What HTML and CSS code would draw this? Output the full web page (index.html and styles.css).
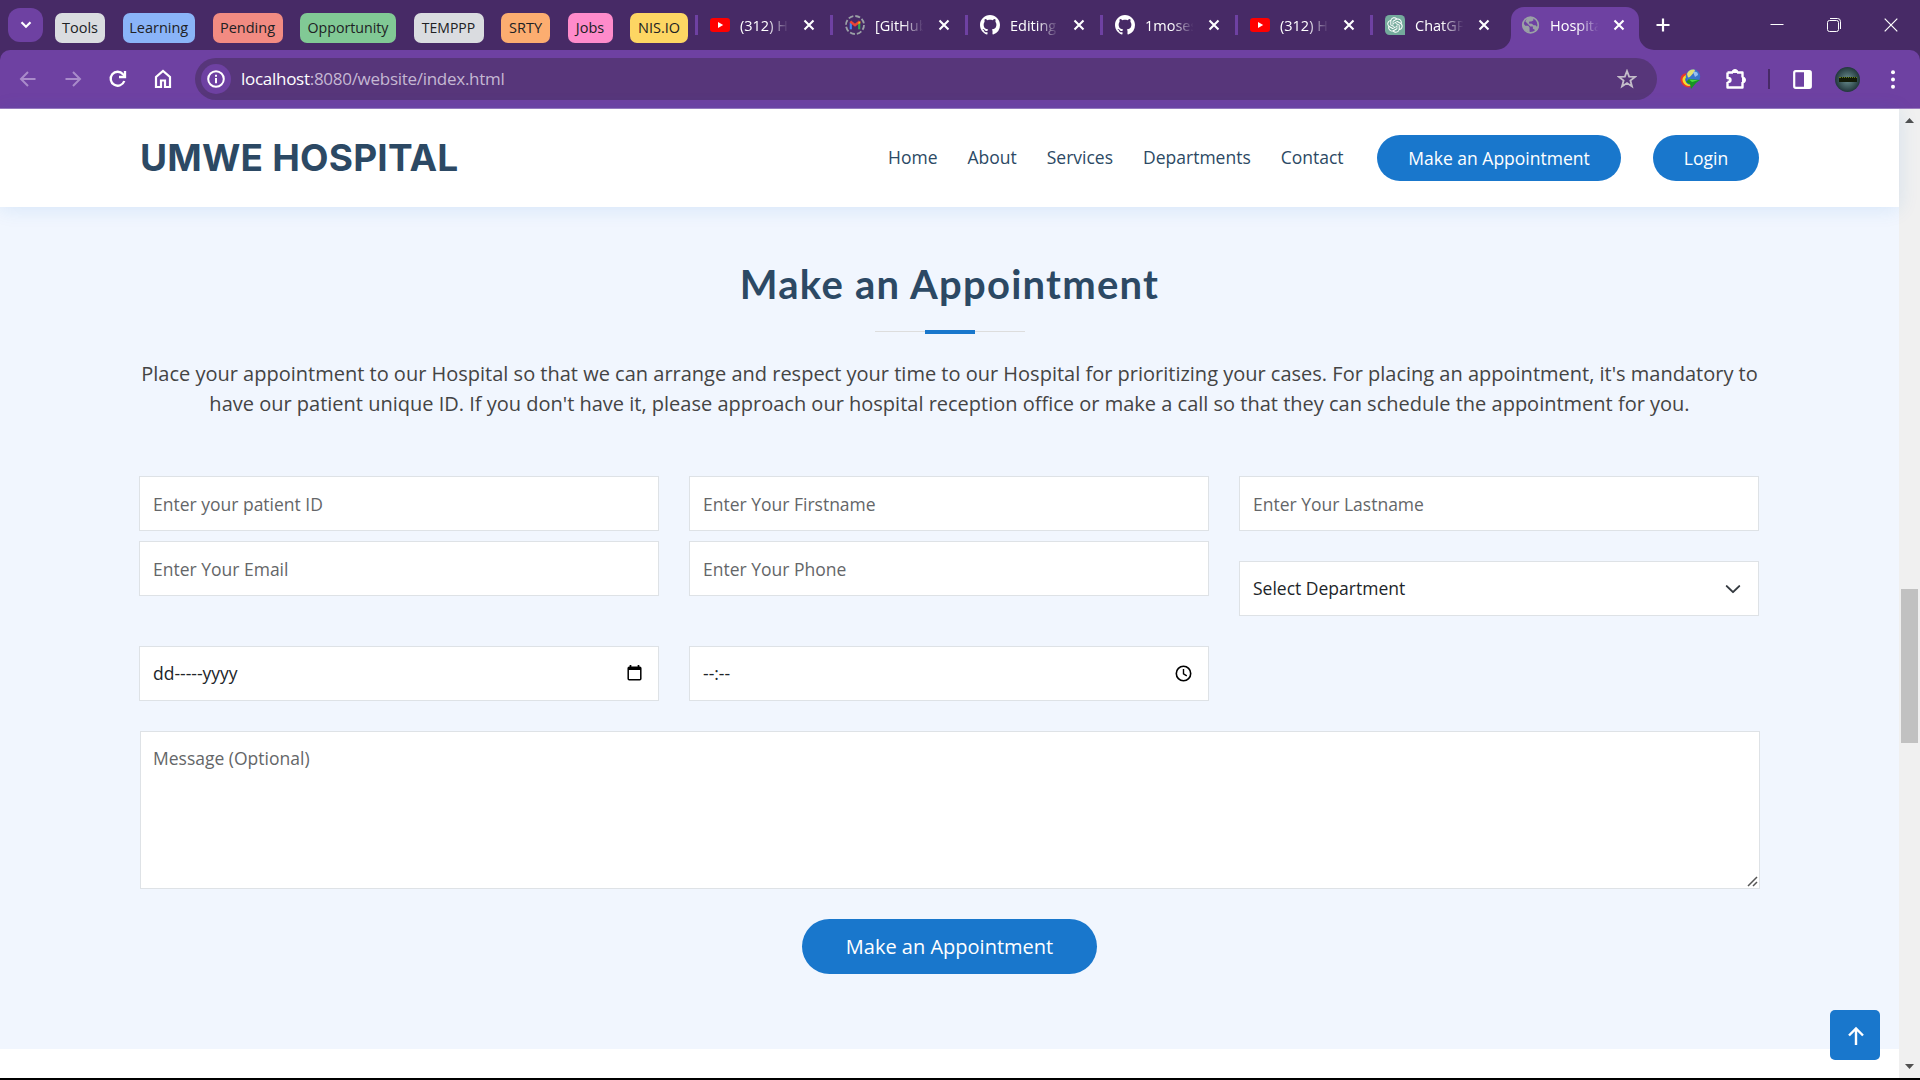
FILE: index.html
```html
<!DOCTYPE html>
<html lang="en">
<head>
<meta charset="utf-8">
<title>Hospital</title>
<link rel="stylesheet" href="styles.css">
</head>
<body>
<svg class="defs" width="0" height="0">
  <symbol id="x" viewBox="0 0 12 12"><path d="M1.500 1.500l9 9M10.500 1.500l-9 9" stroke="#fff" stroke-width="2.100" fill="none"/></symbol>
  <symbol id="yt" viewBox="0 0 20 20"><rect y="3" width="20" height="14" rx="3.200" fill="#f00"/><path d="M8 7l5.200 3L8 13z" fill="#fff"/></symbol>
  <symbol id="gh" viewBox="0 0 16 16"><path fill="#fff" d="M8 0C3.580 0 0 3.580 0 8c0 3.540 2.290 6.530 5.470 7.590.4.070.550-.170.550-.380 0-.190-.010-.820-.010-1.490-2.010.370-2.530-.490-2.690-.940-.090-.230-.480-.940-.820-1.130-.280-.150-.680-.520-.010-.530.630-.010 1.080.580 1.230.820.720 1.210 1.870.870 2.330.660.070-.520.280-.870.510-1.070-1.780-.2-3.640-.890-3.640-3.950 0-.870.310-1.590.820-2.150-.080-.2-.360-1.020.080-2.120 0 0 .670-.210 2.200.820.640-.180 1.320-.270 2-.270s1.360.090 2 .270c1.530-1.040 2.200-.820 2.200-.820.440 1.100.160 1.920.080 2.120.510.560.820 1.270.820 2.150 0 3.070-1.870 3.750-3.650 3.950.290.250.540.730.540 1.480 0 1.070-.010 1.930-.010 2.200 0 .210.150.460.550.380A8.010 8.010 0 0 0 16 8c0-4.420-3.580-8-8-8z"/></symbol>
</svg>

<div class="tabstrip">
  <div class="tab-search"><svg width="12" height="8" viewBox="0 0 12 8"><path d="M1.500 1.300L6 5.800l4.500-4.500" stroke="#fff" stroke-width="2.200" fill="none"/></svg></div>
  <div class="groups">
    <span class="chip grey w-tools">Tools</span>
    <span class="chip blue w-learning">Learning</span>
    <span class="chip red w-pending">Pending</span>
    <span class="chip green w-opportunity">Opportunity</span>
    <span class="chip grey w-temp">TEMPPP</span>
    <span class="chip orange w-srty">SRTY</span>
    <span class="chip pink w-jobs">Jobs</span>
    <span class="chip yellow w-nis">NIS.IO</span>
  </div>
  <div class="tabs">
    <div class="tab"><svg class="fav"><use href="#yt"/></svg><span class="tab-title">(312) H</span><svg class="close"><use href="#x"/></svg></div>
    <div class="tab"><svg class="fav" viewBox="0 0 20 20"><circle cx="10" cy="10" r="9" fill="none" stroke="#9aa0a6" stroke-width="1.800" stroke-dasharray="5.070 2"/><path d="M5.800 14.300V7.500" stroke="#4285f4" stroke-width="2.200"/><path d="M14.200 14.300V7.500" stroke="#34a853" stroke-width="2.200"/><path d="M5.300 6.500L10 10.200l4.700-3.700" stroke="#ea4335" stroke-width="2.600" fill="none"/><path d="M13.100 7.800l2.200-1.800v2.500h-2.200z" fill="#fbbc04"/></svg><span class="tab-title">[GitHub</span><svg class="close"><use href="#x"/></svg></div>
    <div class="tab"><svg class="fav"><use href="#gh"/></svg><span class="tab-title">Editing</span><svg class="close"><use href="#x"/></svg></div>
    <div class="tab"><svg class="fav"><use href="#gh"/></svg><span class="tab-title">1moses</span><svg class="close"><use href="#x"/></svg></div>
    <div class="tab"><svg class="fav"><use href="#yt"/></svg><span class="tab-title">(312) H</span><svg class="close"><use href="#x"/></svg></div>
    <div class="tab"><svg class="fav" viewBox="0 0 40 40"><path d="M9 0h22a9 9 0 0 1 9 9v31H9a9 9 0 0 1-9-9V9a9 9 0 0 1 9-9z" fill="#74aa9c"/><path transform="translate(4.500 4.500) scale(1.290)" fill="#fff" d="M22.282 9.821a5.985 5.985 0 0 0-.516-4.911 6.046 6.046 0 0 0-6.510-2.900A6.065 6.065 0 0 0 4.981 4.182a5.985 5.985 0 0 0-3.998 2.900 6.046 6.046 0 0 0 .743 7.097 5.980 5.980 0 0 0 .511 4.911 6.051 6.051 0 0 0 6.515 2.900A5.985 5.985 0 0 0 13.260 24a6.056 6.056 0 0 0 5.772-4.206 5.989 5.989 0 0 0 3.998-2.900 6.056 6.056 0 0 0-.748-7.073zm-9.022 12.608a4.476 4.476 0 0 1-2.876-1.041l.142-.080 4.778-2.758a.795.795 0 0 0 .393-.681v-6.737l2.020 1.169a.071.071 0 0 1 .038.052v5.583a4.504 4.504 0 0 1-4.495 4.494zm-9.661-4.125a4.471 4.471 0 0 1-.535-3.014l.142.085 4.783 2.758a.771.771 0 0 0 .781 0l5.843-3.369v2.332a.080.080 0 0 1-.033.062L9.740 19.950a4.499 4.499 0 0 1-6.141-1.646zM2.341 7.896a4.485 4.485 0 0 1 2.366-1.973V11.600a.766.766 0 0 0 .388.677l5.814 3.354-2.020 1.169a.076.076 0 0 1-.071 0l-4.830-2.787A4.504 4.504 0 0 1 2.341 7.872zm16.596 3.856L13.104 8.364 15.119 7.200a.076.076 0 0 1 .071 0l4.830 2.791a4.494 4.494 0 0 1-.677 8.104v-5.677a.790.790 0 0 0-.407-.667zm2.011-3.023l-.142-.085-4.774-2.782a.776.776 0 0 0-.785 0L9.409 9.230V6.897a.066.066 0 0 1 .028-.062l4.830-2.787a4.499 4.499 0 0 1 6.680 4.660zM8.307 12.863l-2.020-1.164a.080.080 0 0 1-.038-.057V6.074a4.499 4.499 0 0 1 7.376-3.454l-.142.081L8.704 5.459a.795.795 0 0 0-.393.681zm1.098-2.365l2.602-1.500 2.607 1.500v2.999l-2.597 1.500-2.607-1.500Z"/></svg><span class="tab-title">ChatGP</span><svg class="close"><use href="#x"/></svg></div>
    <div class="tab active"><svg class="foot left" width="15" height="15" viewBox="0 0 15 15"><path d="M15 0v15H0A15 15 0 0 0 15 0z" fill="#6e41a2"/></svg><svg class="fav globe" viewBox="0 0 20 20"><circle cx="10" cy="10" r="8.200" fill="none" stroke="#9aa0a6" stroke-width="1.800"/><path d="M2 7.500l2.500 3.200h3.200l1.300 2v5.300A8.500 8.500 0 0 1 2 7.500zM7 2.200h6v3l-2.200 1-2 .2-.5 2 3.200.4 1.800 1.500h2l1.200 1.200h2.500a8.500 8.500 0 0 1-4 6l-.5-2.500-2-1v-2.500H9.800L6.500 8.200 4.500 6z" fill="#9aa0a6"/></svg><span class="tab-title">Hospita</span><svg class="close"><use href="#x"/></svg><svg class="foot right" width="15" height="15" viewBox="0 0 15 15"><path d="M0 0v15h15A15 15 0 0 1 0 0z" fill="#6e41a2"/></svg></div>
  </div>
  <svg class="plus" width="14" height="14" viewBox="0 0 14 14"><path d="M7 .5v13M.5 7h13" stroke="#fff" stroke-width="2.200"/></svg>
  <div class="window-controls">
    <svg width="14" height="14" viewBox="0 0 14 14"><path d="M.5 6.500h13" stroke="#fff"/></svg>
    <svg width="14" height="14" viewBox="0 0 14 14" fill="none" stroke="#fff"><rect x=".5" y="2.500" width="11" height="11" rx="2"/><path d="M3 .5h7.500a3 3 0 0 1 3 3V11"/></svg>
    <svg width="14" height="14" viewBox="0 0 14 14"><path d="M.7.700l12.600 12.600M13.300.700L.7 13.300" stroke="#fff" stroke-width="1.200"/></svg>
  </div>
</div>

<div class="toolbar-back">
  <div class="toolbar">
    <div class="nav-icons">
      <svg class="dim" viewBox="0 0 20 20"><path d="M17.500 10H3.500M10 3L3 10l7 7"/></svg>
      <svg class="dim" viewBox="0 0 20 20"><path d="M2.500 10h14M10 3l7 7-7 7"/></svg>
      <svg viewBox="0 0 20 20"><path d="M16.300 12A7 7 0 1 1 15 5.200l2 2" stroke-width="2.300"/><path d="M17 2v6h-6" stroke-width="2.300"/></svg>
      <svg viewBox="0 0 20 20"><path d="M3 18V8l7-6 7 6v10h-5v-6.500H8V18z" stroke-width="2.200"/></svg>
    </div>
    <div class="omnibox">
      <div class="site-info"><svg width="18" height="18" viewBox="0 0 18 18"><circle cx="9" cy="9" r="7.800" fill="none" stroke="#fff" stroke-width="2"/><path d="M9 8v5.200M9 4.700v2" stroke="#fff" stroke-width="2"/></svg></div>
      <span class="url"><b>localhost</b>:8080/website/index.html</span>
      <svg class="star" width="20" height="20" viewBox="0 0 20 20"><path d="M10 2l2.100 5.600 6 .3-4.700 3.700 1.600 5.800-5-3.300-5 3.300 1.600-5.800L1.900 7.900l6-.3z" fill="none" stroke="#c3bdc9" stroke-width="1.800"/></svg>
    </div>
    <div class="extensions">
      <svg class="idm" width="22" height="20" viewBox="0 0 22 20">
        <path d="M11 5C4 2 0 8 2 13s8 7 11 4" fill="#e5382c"/><path d="M11 6C6 5 2 9 4 13s6 5 9 3" fill="#f6dc28"/><path d="M11 8c-4-1-6 2-4 5s4 3 6 2" fill="#2c61c8"/>
        <circle cx="14" cy="7.500" r="7.200" fill="#3974cb"/><path d="M8 5c1-3 3-4.500 6-4.500s2 2 0 4-3 4-5 4z" fill="#e4df70"/><path d="M14 3c3-1 5 0 5 3l-3 2z" fill="#97bff1"/>
        <path d="M10 10l11 1-4 3-5 6-1-5-4-2z" fill="#179322"/><path d="M10 10.500l9 .8-6 1.800z" fill="#49df3f"/>
      </svg>
      <svg class="puzzle" width="22" height="22" viewBox="0 0 22 22"><path d="M2.500 4.500H8M12 4.500h5.500v5M17.500 14v5.500h-15V14M2.500 4.500V10c4 0 4 4 0 4" fill="none" stroke="#fff" stroke-width="2.400" stroke-linejoin="round"/><path d="M7 4.500a3 3 0 0 1 6 0zM17.500 9a3 3 0 0 1 0 6z" fill="#fff" stroke="#fff"/></svg>
      <span class="divider"></span>
      <svg class="panel" width="19" height="19" viewBox="0 0 19 19"><rect x="1.200" y="1.200" width="16.600" height="16.600" rx="1.500" fill="none" stroke="#fff" stroke-width="2.200"/><path d="M11 1h7v17h-7z" fill="#fff"/></svg>
      <div class="avatar"><span></span></div>
      <svg class="dots" width="4" height="19" viewBox="0 0 4 19" fill="#fff"><circle cx="2" cy="2.200" r="2"/><circle cx="2" cy="9.500" r="2"/><circle cx="2" cy="16.800" r="2"/></svg>
    </div>
  </div>
</div>

<div class="viewport">
  <main class="page">
    <header class="site-header">
      <h1 class="logo">UMWE HOSPITAL</h1>
      <nav class="menu"><a>Home</a><a>About</a><a>Services</a><a>Departments</a><a>Contact</a></nav>
      <a class="pill appointment">Make an Appointment</a>
      <a class="pill login">Login</a>
    </header>
    <section class="booking">
      <h2 class="heading">Make an Appointment</h2>
      <div class="rule"><span></span></div>
      <p class="intro">Place your appointment to our Hospital so that we can arrange and respect your time to our Hospital for prioritizing your cases. For placing an appointment, it's mandatory to<br>have our patient unique ID. If you don't have it, please approach our hospital reception office or make a call so that they can schedule the appointment for you.</p>
      <form class="form">
        <div class="row">
          <input class="field" placeholder="Enter your patient ID">
          <input class="field" placeholder="Enter Your Firstname">
          <input class="field" placeholder="Enter Your Lastname">
        </div>
        <div class="row second">
          <input class="field" placeholder="Enter Your Email">
          <input class="field" placeholder="Enter Your Phone">
          <div class="field select"><span>Select Department</span><svg width="20" height="20" viewBox="0 0 16 16"><path d="M3 5.700L8 10.500l5-4.800" fill="none" stroke="#343a40" stroke-width="1.600" stroke-linecap="round" stroke-linejoin="round"/></svg></div>
        </div>
        <div class="row third">
          <div class="field picker"><span>dd-----yyyy</span><svg width="15" height="16" viewBox="0 0 15 16"><path d="M3.500 0v3M11.500 0v3" stroke="#000" stroke-width="1.700"/><rect x="1.200" y="2.200" width="12.600" height="12.600" rx="1" fill="none" stroke="#000" stroke-width="1.500"/><path d="M1 2h13v3H1z"/></svg></div>
          <div class="field picker time"><span>--:--</span><svg width="17" height="17" viewBox="0 0 17 17" fill="none" stroke="#000"><circle cx="8.500" cy="8.500" r="7.200" stroke-width="1.600"/><path d="M8.500 4v4.800l3.300 2" stroke-width="1.400"/></svg></div>
        </div>
        <div class="message-wrap">
          <textarea class="field message" placeholder="Message (Optional)"></textarea>
          <svg class="grip" width="11" height="11" viewBox="0 0 11 11"><path d="M1 10l9-9M6 10l4-4" stroke="#555" stroke-width="1.500"/></svg>
        </div>
        <button class="submit" type="button">Make an Appointment</button>
      </form>
    </section>
    <a class="to-top"><svg width="18" height="20" viewBox="0 0 18 20"><path d="M9 19V2.500M2 9.500l7-7 7 7" fill="none" stroke="#fff" stroke-width="2.400"/></svg></a>
  </main>
  <div class="scrollbar">
    <svg width="9" height="5" viewBox="0 0 9 5"><path d="M0 5l4.500-5L9 5z" fill="#505050"/></svg>
    <div class="thumb"></div>
    <svg class="down" width="9" height="5" viewBox="0 0 9 5"><path d="M0 0l4.500 5L9 0z" fill="#505050"/></svg>
  </div>
</div>
</body>
</html>
```
FILE: styles.css
```css
* { box-sizing: border-box; }
body {
  margin: 0;
  width: 1920px;
  height: 1080px;
  overflow: hidden;
  display: flex;
  flex-direction: column;
  font-family: "Open Sans", sans-serif;
  color: #444;
  background: #000;
}
svg { display: block; flex: none; }
.defs { position: absolute; }

/* tab strip */
.tabstrip { height: 50px; flex: none; display: flex; background: #472a66; }
.tab-search {
  width: 35px; height: 34px; margin: 8px 0 0 8px; border-radius: 12px;
  background: #6e41a2; display: flex; align-items: center; justify-content: center; flex: none;
}
.groups { display: flex; gap: 17.500px; margin: 13px 0 0 12px; width: 640px; flex: none; }
.chip {
  height: 30px; border-radius: 7px; line-height: 29px; text-align: center;
  font-size: 14.500px; color: #202124; white-space: nowrap; flex: none;
}
.grey { background: #dadce0; }
.blue { background: #8ab4f8; }
.red { background: #f28b82; }
.green { background: #81c995; }
.orange { background: #fcad70; }
.pink { background: #ff8bcb; }
.yellow { background: #fdd663; }
.w-tools { width: 50px; }
.w-learning { width: 72.500px; }
.w-pending { width: 70px; }
.w-opportunity { width: 96px; font-size: 14.200px; }
.w-temp { width: 70px; font-size: 14px; }
.w-srty { width: 49px; }
.w-jobs { width: 45px; }
.w-nis { width: 58px; }
.tabs { display: flex; flex: none; }
.tab {
  width: 135px; height: 50px; padding: 15px 0 0 15px; display: flex;
  background: linear-gradient(#6e41a2, #6e41a2) no-repeat 0 15px / 3px 20px;
}
.tab.active {
  position: relative; width: 128px; height: 43px; margin: 7px 0 0 6px; padding: 8px 0 0 10px;
  background: #6e41a2; border-radius: 13px 13px 0 0;
}
.foot { position: absolute; bottom: 0; }
.foot.left { right: 100%; }
.foot.right { left: 100%; }
.fav { width: 20px; height: 20px; }
.tab-title {
  width: 54px; margin-left: 10px; height: 22px; line-height: 21px; white-space: nowrap;
  font-size: 14.500px; color: #fff; flex: none;
  -webkit-mask-image: linear-gradient(90deg, #000 50%, transparent 90%);
  mask-image: linear-gradient(90deg, #000 50%, transparent 90%);
}
.close { width: 12px; height: 12px; margin: 4px 0 0 9px; }
.active .globe { width: 19px; }
.plus { margin: 18px 0 0 17px; }
.window-controls { display: flex; gap: 43px; margin: 18px 22px 0 auto; }

/* toolbar */
.toolbar-back { background: #472a66; flex: none; }
.toolbar {
  height: 59px; background: #6e41a2; border-bottom: 1px solid #9a7abd;
  border-radius: 10px 10px 0 0; display: flex; align-items: center;
}
.nav-icons { display: flex; gap: 25px; width: 195px; padding-left: 17.500px; flex: none; }
.nav-icons svg { width: 20px; height: 20px; fill: none; stroke: #fff; stroke-width: 2; }
.nav-icons .dim { stroke: #a98bca; }
.omnibox {
  width: 1462px; height: 42px; border-radius: 21px; background: #57367a;
  display: flex; align-items: center; padding-left: 6px; flex: none;
}
.site-info {
  width: 30px; height: 30px; border-radius: 50%; background: #6e41a2;
  display: flex; align-items: center; justify-content: center;
}
.url { margin-left: 10px; font-size: 17px; line-height: 24px; color: #c5b8d3; letter-spacing: -.28px; }
.url b { font-weight: 400; color: #fff; }
.star { margin: 0 20px 0 auto; }
.extensions { display: flex; align-items: center; flex: 1; }
.idm { margin-left: 22px; }
.puzzle { margin-left: 24px; }
.divider { width: 2px; height: 20px; background: #472a66; margin-left: 21px; }
.panel { margin-left: 23px; }
.avatar {
  width: 25px; height: 25px; border-radius: 50%; margin-left: 23px;
  background: radial-gradient(#6b9090, #1d3137 75%); display: flex; align-items: center; justify-content: center;
}
.avatar span { width: 18px; height: 5px; background: #121a08; border-top: 1px dotted #667d1a; }
.dots { margin-left: 31px; }

/* web page */
.viewport { height: 969px; display: flex; flex: none; }
.page { width: 1899px; background: #fff; position: relative; }
.site-header {
  position: relative; height: 98px; padding: 0 140px; display: flex; align-items: center;
  background: #fff; box-shadow: 0 2px 19px rgba(25, 119, 204, .12);
}
.logo {
  margin: -2px 0 0; width: 748px; font-family: Inter, sans-serif; font-size: 37px; font-weight: 700; line-height: 1;
  color: #2c4964; letter-spacing: .2px; white-space: nowrap;
}
.menu { display: flex; gap: 30px; width: 489px; padding-bottom: 2px; font-size: 17.500px; color: #2c4964; flex: none; white-space: nowrap; }
.pill {
  height: 46px; line-height: 46px; border-radius: 23px; background: #1977cc; color: #fff;
  font-size: 17.500px; text-align: center; flex: none;
}
.appointment { width: 244px; }
.login { width: 106px; margin-left: 32px; }
.booking { height: 842px; padding: 53px 139.500px 0; background: #f1f6fe; }
.heading {
  margin: 0; height: 50px; line-height: 48px; text-align: center; white-space: nowrap;
  font-family: Lato, sans-serif; font-size: 40px; font-weight: 700; color: #2c4964; letter-spacing: 1.250px;
}
.rule { width: 150px; height: 1px; background: #ddd; margin: 21px auto 0; display: flex; justify-content: center; }
.rule span { width: 50px; height: 4px; margin-top: -1px; background: #1977cc; flex: none; }
.intro { margin: 27px -10px 0; font-size: 20px; line-height: 30px; text-align: center; white-space: nowrap; }
.form { margin-top: 57px; }
.row { display: grid; grid-template-columns: repeat(3, 520px); gap: 30px; margin-left: -.5px; }
.second { margin-top: 10px; align-items: start; }
.second .select { margin-top: 20px; }
.third { margin-top: 30px; }
.field {
  display: block; width: 100%; height: 55px; padding: 0 13px; border: 1px solid #dee2e6; border-radius: 0;
  background: #fff; font: 17.500px "Open Sans", sans-serif; color: #212529; outline: 0;
}
.field::placeholder { color: #646668; opacity: 1; }
.select, .picker { display: flex; align-items: center; justify-content: space-between; }
.select span, .picker span { padding-bottom: 2px; }
.picker svg { margin-bottom: 1px; }
.select { padding-right: 15px; }
.picker { padding-right: 16px; }
.message-wrap { margin-top: 30px; position: relative; }
.message { height: 158px; padding: 14px 12.500px; resize: none; }
.grip { position: absolute; right: 2px; bottom: 2px; }
.submit {
  display: block; width: 295px; height: 55px; margin: 30px auto 0; border: 0; border-radius: 28px;
  background: #1977cc; color: #fff; font: 20px "Open Sans", sans-serif;
}
.to-top {
  position: absolute; right: 19px; bottom: 18px; width: 50px; height: 50px; border-radius: 5px;
  background: #1977cc; display: flex; align-items: center; justify-content: center;
}
.to-top svg { margin: 1px 0 0 1px; }
.scrollbar { width: 21px; background: #f0f0f0; display: flex; flex-direction: column; align-items: center; padding-top: 9px; }
.thumb { width: 17px; height: 154px; margin-top: 466px; background: #c1c1c1; }
.down { margin: auto 0 9px; }
```
